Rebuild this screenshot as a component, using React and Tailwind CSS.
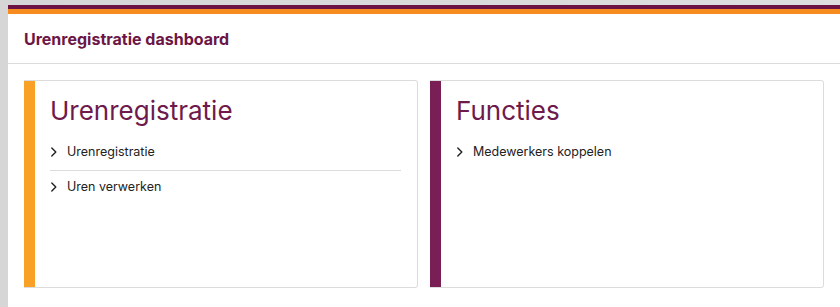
import React from "react";

function Chevron() {
  return (
    <svg width="8" height="10" viewBox="0 0 8 10" className="shrink-0" aria-hidden="true">
      <path d="M1.8 1 L5.8 5 L1.8 9" fill="none" stroke="#222" strokeWidth="1.4" strokeLinecap="round" strokeLinejoin="round" />
    </svg>
  );
}

function Card({ title, items, accent }) {
  return (
    <div className="flex h-[208px] rounded-r-[3px] border border-l-0 border-[#dcdcdc] bg-white">
      <div className={`w-[11px] shrink-0 ${accent}`} />
      <div className="flex-1 pl-[15px] pr-4 pt-[14px]">
        <h2 className="text-[26px] leading-[31px] font-normal text-[#6e1a4c]">{title}</h2>
        <ul className="mt-[10px]">
          {items.map((it, i) => (
            <li
              key={it}
              className={`flex items-center gap-[9px] pt-[6px] pb-2 text-[12.5px] leading-5 text-[#222] ${i < items.length - 1 ? "border-b border-[#dcdcdc]" : ""}`}
            >
              <Chevron />
              <span>{it}</span>
            </li>
          ))}
        </ul>
      </div>
    </div>
  );
}

export default function App() {
  return (
    <div
      className="min-h-screen bg-gradient-to-r from-[#d6d6d6] to-[#dedede] pl-2 pt-[5px]"
      style={{ fontFamily: "Inter, 'Noto Sans', sans-serif" }}
    >
      <div className="min-h-[302px] bg-white">
        <div className="h-[4px] bg-[#6c1346]" />
        <div className="h-[5px] bg-[#f68b1f]" />
        <div className="flex h-[50px] items-center border-b border-[#dcdcdc] pl-4">
          <h1 className="text-[16px] leading-5 font-bold text-[#6b1645]">Urenregistratie dashboard</h1>
        </div>
        <div className="grid grid-cols-2 gap-3 pl-4 pr-4 pt-4">
          <Card title="Urenregistratie" items={["Urenregistratie", "Uren verwerken"]} accent="bg-[#f9a126]" />
          <Card title="Functies" items={["Medewerkers koppelen"]} accent="bg-[#7a1f55]" />
        </div>
      </div>
    </div>
  );
}
